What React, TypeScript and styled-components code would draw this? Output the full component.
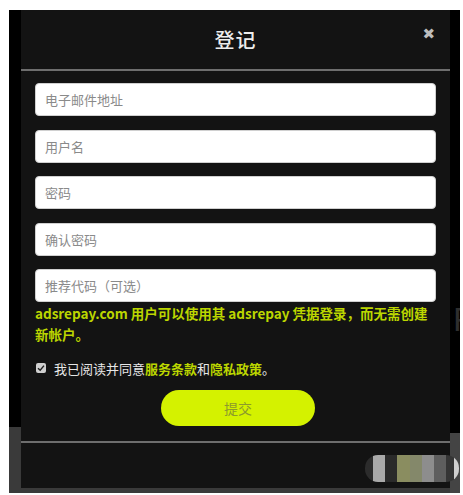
import React from "react";
import styled, { createGlobalStyle } from "styled-components";

const GlobalStyle = createGlobalStyle`
  html, body {
    margin: 0;
    padding: 0;
    background: #ffffff;
    font-family: "Noto Sans CJK SC", "Noto Sans", "Liberation Sans", sans-serif;
  }
`;

const Page = styled.div`
  padding: 10px 3px 2px 9px;
`;

const Backdrop = styled.div`
  display: flex;
  height: 483px;
  background: linear-gradient(to bottom, #000 0, #000 417px, #3a3a3a 417px, #3a3a3a 100%);
  padding-left: 12px;
  overflow: hidden;
`;

const SideStrip = styled.div`
  flex: 1;
  min-width: 0;
  overflow: hidden;
  display: flex;
  flex-direction: column;
  align-items: flex-start;
  padding-top: 292px;
  background: linear-gradient(to bottom, #000 0, #000 423px, #444 423px, #444 100%);
`;

const GhostLetter = styled.span`
  font-family: "Liberation Sans", sans-serif;
  font-size: 34px;
  color: #2e2e2e;
  margin-left: 3px;
  line-height: 1;
`;

const Modal = styled.div`
  flex-shrink: 0;
  width: 429px;
  height: 478px;
  background: #131313;
  display: flex;
  flex-direction: column;
`;

const Header = styled.div`
  height: 59px;
  display: flex;
  align-items: center;
  justify-content: center;
  position: relative;
  border-bottom: 2px solid #6e6e6e;
`;

const Title = styled.h2`
  margin: 0;
  font-size: 20px;
  font-weight: 500;
  color: #ededed;
  letter-spacing: 1px;
`;

const Close = styled.span`
  position: absolute;
  right: 15px;
  top: 15px;
  font-family: "DejaVu Sans", sans-serif;
  font-size: 15px;
  font-weight: bold;
  color: #bdbdbd;
`;

const Body = styled.div`
  padding: 12px 14px 0 14px;
  display: flex;
  flex-direction: column;
`;

const Field = styled.input`
  box-sizing: border-box;
  height: 33px;
  margin-bottom: 13.5px;
  border: 1px solid #d0d0d0;
  border-radius: 4px;
  background: #fff;
  padding: 0 9px;
  font-family: "Noto Sans CJK SC", sans-serif;
  font-size: 13px;
  color: #333;
  outline: none;

  &::placeholder {
    color: #8a8a8a;
  }
`;

const Info = styled.p`
  margin: -13px 0 0 0;
  font-size: 13.5px;
  line-height: 21px;
  font-weight: 600;
  color: #bcd600;
`;

const AgreeRow = styled.label`
  display: flex;
  align-items: center;
  gap: 8px;
  margin-top: 14px;
  margin-left: 1px;
  font-size: 13px;
  color: #e6e6e6;
`;

const Check = styled.span`
  width: 10px;
  height: 10px;
  border-radius: 2px;
  background: #cfcfcf;
  display: flex;
  align-items: center;
  justify-content: center;
`;

const Link = styled.span`
  color: #bcd600;
  font-weight: 600;
`;

const Submit = styled.button`
  align-self: center;
  margin-top: 12px;
  margin-left: 5px;
  width: 154px;
  height: 36px;
  border: none;
  border-radius: 18px;
  background: #d4f200;
  color: #8c9a2c;
  font-family: "Noto Sans CJK SC", sans-serif;
  font-size: 14px;
`;

const Footer = styled.div`
  margin-top: 15px;
  border-top: 2px solid #6e6e6e;
  flex: 1;
  display: flex;
  justify-content: flex-end;
  align-items: flex-start;
  padding-top: 12px;
`;

const Mosaic = styled.div`
  position: relative;
  z-index: 1;
  display: flex;
  height: 27px;
  margin-right: -9px;
  border-radius: 13px;
  overflow: hidden;
`;

const Cell = styled.span<{ $c: string; $w: number }>`
  width: ${(p) => p.$w}px;
  background: ${(p) => p.$c};
`;

const cells: [string, number][] = [
  ["#2c2c2c", 8],
  ["#a9a9a9", 12],
  ["#2a2a2a", 12],
  ["#8a8d60", 13],
  ["#84886a", 12],
  ["#8d8d8d", 12],
  ["#5e5e5e", 12],
  ["#353535", 8],
  ["#cfcfcf", 5],
];

export default function App() {
  return (
    <Page>
      <GlobalStyle />
      <Backdrop>
        <Modal>
          <Header>
            <Title>登记</Title>
            <Close>✖</Close>
          </Header>
          <Body>
            <Field placeholder="电子邮件地址" />
            <Field placeholder="用户名" />
            <Field placeholder="密码" type="password" />
            <Field placeholder="确认密码" type="password" />
            <Field placeholder="推荐代码（可选）" />
            <Info>adsrepay.com 用户可以使用其 adsrepay 凭据登录，而无需创建新帐户。</Info>
            <AgreeRow>
              <Check>
                <svg width="8" height="8" viewBox="0 0 8 8">
                  <path d="M1 4.2 L3.2 6.3 L7 1.6" stroke="#222" strokeWidth="1.4" fill="none" />
                </svg>
              </Check>
              <span>
                我已阅读并同意<Link>服务条款</Link>和<Link>隐私政策</Link>。
              </span>
            </AgreeRow>
            <Submit>提交</Submit>
          </Body>
          <Footer>
            <Mosaic>
              {cells.map(([c, w], i) => (
                <Cell key={i} $c={c} $w={w} />
              ))}
            </Mosaic>
          </Footer>
        </Modal>
        <SideStrip>
          <GhostLetter>R</GhostLetter>
        </SideStrip>
      </Backdrop>
    </Page>
  );
}
